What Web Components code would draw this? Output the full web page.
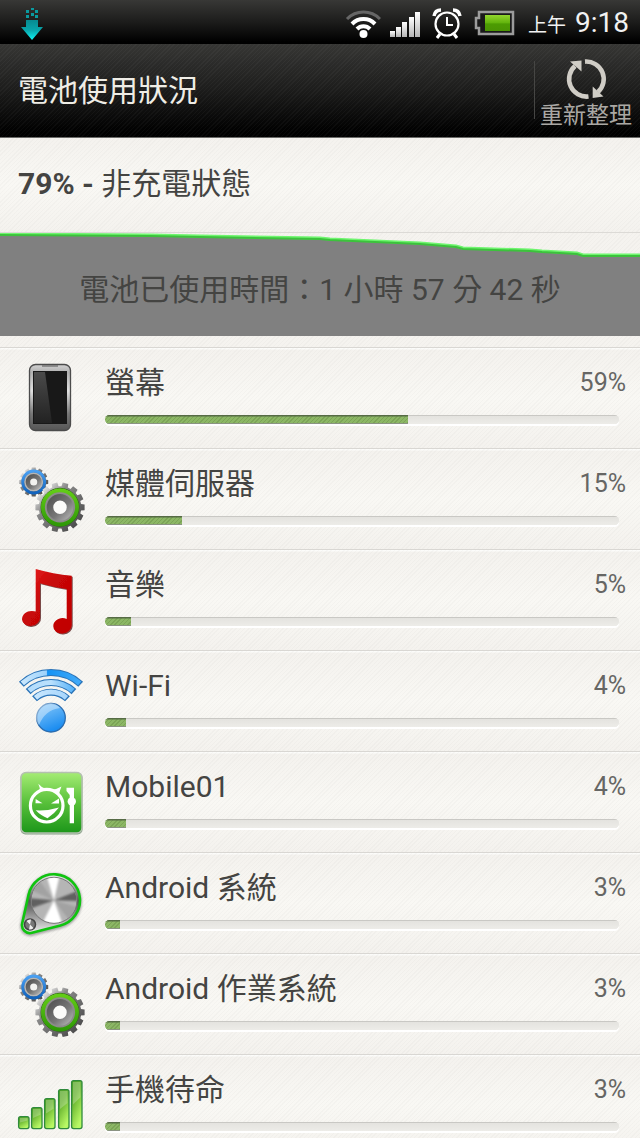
<!DOCTYPE html>
<html lang="zh-TW">
<head>
  <meta charset="UTF-8">
  <meta name="viewport" content="width=device-width, initial-scale=1.0">
  <title>電池使用狀況</title>
  <style>
    body{
      margin: 0;
      font-family: Roboto, "Noto Sans CJK TC", sans-serif;
      font-size: 30px;
      color: #444442;
      --stripes: repeating-linear-gradient(135deg, rgba(0,0,0,.018) 0 1px, transparent 1px 3px);
    }
  </style>
</head>
<body>
  <template id="status-bar">
    <style>
      :host{
        display: flex;
        align-items: center;
        justify-content: space-between;
        height: 44px;
        padding: 0 11px 0 18px;
        box-sizing: border-box;
        background: linear-gradient(#383836, #1c1c1b 50%, #000 95%);
        color: #f2f2f2;
      }
      svg{
        display: block;
      }
      .right{
        display: flex;
        align-items: center;
        gap: 9px;
      }
      .clock{
        display: flex;
        align-items: baseline;
        gap: 9px;
        padding-top: 4px;
        font-size: 28px;
        line-height: 40px;
      }
      .ampm{
        font-size: 19px;
      }
    </style>
    <svg width="28" height="36" viewBox="0 0 28 36">
      <defs>
        <linearGradient id="down" x1="0" y1="0" x2="0" y2="1">
          <stop offset="0" stop-color="#078a90"/>
          <stop offset=".5" stop-color="#08a5ab"/>
          <stop offset="1" stop-color="#0ff6f6"/>
        </linearGradient>
      </defs>
      <g fill="#0a9a9f">
        <rect x="8" y="6" width="3" height="3"/><rect x="13" y="4" width="3" height="2"/><rect x="17" y="6" width="3" height="3"/>
        <rect x="13" y="9" width="3" height="3"/><rect x="8" y="11" width="3" height="3"/><rect x="17" y="11" width="3" height="3"/>
      </g>
      <path d="M8 16H20V23H25L14 36L3 23H8Z" fill="url(#down)"/>
    </svg>
    <div class="right">
      <svg width="36" height="36" viewBox="0 0 36 36" fill="none" stroke="#fff" stroke-width="4">
        <path d="M2 15A23 23 0 0 1 35 15" stroke="#666" stroke-width="3"/>
        <path d="M7 20A16 16 0 0 1 30 20"/>
        <path d="M12 25A9 9 0 0 1 25 25"/>
        <circle cx="18.500" cy="30" r="4" fill="#fff" stroke="none"/>
      </svg>
      <svg width="30" height="36" viewBox="0 0 30 36">
        <defs>
          <linearGradient id="sig" x1="0" y1="0" x2="0" y2="1">
            <stop offset="0" stop-color="#fff"/>
            <stop offset="1" stop-color="#b5b5b5"/>
          </linearGradient>
        </defs>
        <g fill="url(#sig)">
          <rect x="0" y="27" width="5" height="6"/><rect x="6" y="23" width="5" height="10"/><rect x="12" y="18" width="5" height="15"/>
          <rect x="19" y="13" width="5" height="20"/><rect x="25" y="8" width="5" height="25"/>
        </g>
      </svg>
      <svg width="36" height="36" viewBox="0 0 36 36" fill="none" stroke="#fff">
        <circle cx="18" cy="20" r="11.500" stroke-width="2.200"/>
        <path d="M18 13V21H24" stroke-width="2"/>
        <path d="M11 30L8 34M25 30L28 34" stroke-width="3"/>
        <path d="M5 12Q6 6 12 6M24 6Q30 6 31 12" stroke-width="3.500"/>
      </svg>
      <svg width="45" height="36" viewBox="0 0 45 36">
        <defs>
          <linearGradient id="bat" x1="0" y1="0" x2="0" y2="1">
            <stop offset="0" stop-color="#93d62e"/>
            <stop offset=".5" stop-color="#61b30c"/>
            <stop offset=".55" stop-color="#4c9c02"/>
            <stop offset="1" stop-color="#4a9403"/>
          </linearGradient>
        </defs>
        <path d="M5 8H39V30H5V24H2V14H5Z" fill="#1a1a1a" stroke="#9c9c9c" stroke-width="2.500"/>
        <rect x="11" y="11" width="25" height="16" fill="url(#bat)"/>
      </svg>
      <div class="clock"><span class="ampm">上午</span><span>9:18</span></div>
    </div>
  </template>

  <template id="title-bar">
    <style>
      :host{
        display: flex;
        align-items: center;
        justify-content: space-between;
        height: 94px;
        padding-left: 18px;
        box-sizing: border-box;
        border-bottom: 1px solid #6a6a68;
        background:
          repeating-linear-gradient(135deg, rgba(255,255,255,.03) 0 1px, transparent 1px 3px),
          linear-gradient(#363634, #1f1f1e 45%, #000 95%);
        color: #efede6;
      }
      h1{
        margin: 0;
        font-size: 30px;
        font-weight: 400;
        line-height: 44px;
      }
      button{
        display: flex;
        flex-direction: column;
        align-items: center;
        gap: 3px;
        padding: 4px 8px 0 6px;
        border: 0;
        background: linear-gradient(#464644, #464644) 0 8px / 1px 58px no-repeat;
        color: #aaa8a4;
        font: inherit;
        font-size: 23px;
        line-height: 24px;
      }
      svg{
        display: block;
      }
    </style>
    <h1><slot></slot></h1>
    <button type="button">
      <svg width="44" height="44" viewBox="0 0 44 44">
        <g fill="none" stroke="#d0cdc6" stroke-width="4.600">
          <path d="M24.500 39.500A17.500 17.500 0 0 1 11 9"/>
          <path d="M21 4.600A17.500 17.500 0 0 1 34 35"/>
        </g>
        <path d="M6 4.500L17.500 3.500V14.500Z" fill="#d0cdc6"/>
        <path d="M28.700 29.500V41L39.500 39.500Z" fill="#d0cdc6"/>
      </svg>
      <slot name="action"></slot>
    </button>
  </template>

  <template id="battery-level">
    <style>
      :host{
        display: block;
        padding: 24px 18px 26px;
        line-height: 44px;
        border-bottom: 1px solid #dcdad6;
        background: var(--stripes), linear-gradient(#f4f2ee, #f9f8f4 50%, #f4f2ee);
      }
    </style>
    <b id="level"></b> <slot></slot>
  </template>

  <template id="battery-chart">
    <style>
      :host{
        display: grid;
        align-items: center;
        justify-items: center;
        padding-bottom: 11px;
        background: var(--stripes), #f5f3ef;
      }
      svg, p{
        grid-area: 1 / 1;
      }
      svg{
        display: block;
        width: 100%;
        height: 103px;
      }
      p{
        margin: 0;
        padding-top: 10px;
        line-height: 44px;
      }
    </style>
    <svg viewBox="0 0 640 103" preserveAspectRatio="none">
      <path d="M0 1L150 2L200 3L320 5L330 6L420 10L456 13L463 15L530 17L542 18L577 20L583 22H640V103H0Z" fill="#808080"/>
      <path d="M0 1L150 2L200 3L320 5L330 6L420 10L456 13L463 15L530 17L542 18L577 20L583 22H640" fill="none" stroke="#6ff56f" stroke-width="3"/>
      <path d="M0 2L150 3L200 4L320 6L330 7L420 11L456 14L463 16L530 18L542 19L577 21L583 23H640" fill="none" stroke="#3cc23c" stroke-width="2"/>
    </svg>
    <p><slot></slot></p>
  </template>

  <template id="usage-row">
    <style>
      :host{
        display: flex;
        gap: 19px;
        height: 101px;
        padding-left: 18px;
        box-sizing: border-box;
        border-top: 1px solid #d9d7d3;
        background: var(--stripes), linear-gradient(#fcfcfa 0 1px, #f4f2ee 2px, #f9f8f4 50%, #f4f2ee);
      }
      app-icon{
        flex: none;
        margin-top: 15px;
      }
      .main{
        flex: 1;
        padding-right: 14px;
      }
      .head{
        display: flex;
        justify-content: space-between;
        padding-top: 13px;
        line-height: 44px;
      }
      .percent{
        font-size: 25px;
        color: #666664;
      }
      .track{
        margin: 10px 7px 0 0;
      }
      progress{
        display: block;
        width: 100%;
        height: 9px;
        border: 0;
        border-radius: 5px;
        overflow: hidden;
        appearance: none;
        -webkit-appearance: none;
        background: #e9e8e4;
        box-shadow: 0 2px 0 #fff;
      }
      progress::-webkit-progress-bar{
        background: linear-gradient(#c9c8c4 0 1px, #e4e3df 1px, #edece8);
      }
      progress::-webkit-progress-value{
        background:
          linear-gradient(#566b45 0 1px, transparent 2px 8px, #8b9383 8px),
          repeating-linear-gradient(135deg, rgba(60,90,30,.2) 0 1px, transparent 1px 3px),
          #8cb765;
      }
    </style>
    <app-icon></app-icon>
    <div class="main">
      <div class="head">
        <label class="name" for="bar"><slot></slot></label>
        <span class="percent"></span>
      </div>
      <div class="track"><progress id="bar" max="100" value="0"></progress></div>
    </div>
  </template>

  <template id="battery-screen">
    <style>
      :host{
        display: flex;
        flex-direction: column;
        height: 100vh;
        overflow: hidden;
        background: #f5f3ef;
      }
      ::slotted(*){
        flex: none;
      }
      main{
        flex: 1;
        min-height: 0;
        overflow-y: auto;
        scrollbar-width: none;
      }
    </style>
    <slot name="top"></slot>
    <main><slot></slot></main>
  </template>

  <battery-screen>
    <status-bar slot="top"></status-bar>
    <title-bar slot="top">電池使用狀況<span slot="action">重新整理</span></title-bar>
    <battery-level level="79">非充電狀態</battery-level>
    <battery-chart>電池已使用時間：1 小時 57 分 42 秒</battery-chart>
    <usage-row icon="phone" percent="59">螢幕</usage-row>
    <usage-row icon="gears" percent="15">媒體伺服器</usage-row>
    <usage-row icon="music" percent="5">音樂</usage-row>
    <usage-row icon="wifi" percent="4">Wi-Fi</usage-row>
    <usage-row icon="mobile01" percent="4">Mobile01</usage-row>
    <usage-row icon="system" percent="3">Android 系統</usage-row>
    <usage-row icon="gears" percent="3">Android 作業系統</usage-row>
    <usage-row icon="signal" percent="3">手機待命</usage-row>
  </battery-screen>

  <script>
    // outline of a cog wheel centred on cx, cy
    function cog(cx, cy, outer, inner, teeth){
      const points = []
      const step = Math.PI * 2 / teeth
      for(let i = 0; i < teeth; i++){
        const a = i * step
        const corners = [[-.34, inner], [-.26, outer], [.26, outer], [.34, inner]]
        corners.forEach(([k, r]) => {
          const t = a + k * step
          points.push((cx + r * Math.cos(t)).toFixed(1) + ' ' + (cy + r * Math.sin(t)).toFixed(1))
        })
      }
      return 'M' + points.join('L') + 'Z'
    }

    function signalBars(){
      const bars = [[0, 46], [13, 37], [26, 28], [40, 19], [53, 10]]
      return bars.map(([x, y]) => `
        <rect x="${x + .6}" y="${y + .6}" width="10.400" height="${59 - y - 1}" rx="2" fill="url(#bar)" stroke="#2f8a3c" stroke-width="1.300"/>
        <path d="M${x + 2} ${y + 2}H${x + 9.5}V${y + (59 - y) * .35}L${x + 2} ${y + (59 - y) * .5}Z" fill="#fff" opacity=".25"/>`).join('')
    }

    const icons = {
      phone: `
        <defs>
          <linearGradient id="body" x1="0" y1="0" x2="0" y2="1">
            <stop offset="0" stop-color="#d2d2d2"/><stop offset=".12" stop-color="#b0b0b0"/>
            <stop offset=".4" stop-color="#e0e0e0"/><stop offset=".75" stop-color="#777"/><stop offset="1" stop-color="#555"/>
          </linearGradient>
          <linearGradient id="glass" x1="0" y1="0" x2="0" y2="1">
            <stop offset="0" stop-color="#4a4a4a"/><stop offset="1" stop-color="#222"/>
          </linearGradient>
        </defs>
        <rect x="11.500" y="1.500" width="41" height="66" rx="6" fill="url(#body)" stroke="#4c4c4c" stroke-width="1.300"/>
        <path d="M24 3H40" stroke="#666" stroke-width="1.200"/>
        <rect x="15" y="8" width="34" height="53" fill="#181818"/>
        <path d="M16 9H27L34 60H16Z" fill="url(#glass)"/>`,
      gears: `
        <defs>
          <linearGradient id="steel" x1="0" y1="0" x2="1" y2="1">
            <stop offset=".1" stop-color="#f4f4f4"/><stop offset=".35" stop-color="#8a8a8a"/><stop offset="1" stop-color="#3c3c3c"/>
          </linearGradient>
          <linearGradient id="hub" x1="0" y1="0" x2="1" y2="1">
            <stop offset="0" stop-color="#555"/><stop offset=".6" stop-color="#777"/><stop offset="1" stop-color="#aaa"/>
          </linearGradient>
          <linearGradient id="blue" x1="0" y1="0" x2="0" y2="1">
            <stop offset="0" stop-color="#4aa0f2"/><stop offset="1" stop-color="#1163bd"/>
          </linearGradient>
          <linearGradient id="green" x1="0" y1="0" x2="0" y2="1">
            <stop offset="0" stop-color="#62cc16"/><stop offset="1" stop-color="#2f9a06"/>
          </linearGradient>
        </defs>
        <path d="${cog(15.7, 18, 14.6, 12.4, 12)}" fill="url(#steel)"/>
        <circle cx="15.700" cy="18" r="9.500" fill="#b5b5b5"/>
        <circle cx="15.700" cy="18" r="11" fill="none" stroke="url(#blue)" stroke-width="2.800"/>
        <circle cx="15.700" cy="18" r="5.800" fill="#f2f2f0" stroke="url(#hub)" stroke-width="4.500"/>
        <path d="${cog(42, 43.3, 24.8, 21.2, 14)}" fill="url(#steel)"/>
        <circle cx="42" cy="43.300" r="16" fill="#8c8c8a"/>
        <circle cx="42" cy="43.300" r="19" fill="none" stroke="#2d6a12" stroke-width="1"/>
        <circle cx="42" cy="43.300" r="17" fill="none" stroke="url(#green)" stroke-width="3.800"/>
        <circle cx="42" cy="43.300" r="10" fill="#fbfbf9" stroke="url(#hub)" stroke-width="6.500"/>`,
      music: `
        <defs>
          <linearGradient id="red" x1="0" y1="0" x2="1" y2="1">
            <stop offset="0" stop-color="#ee2222"/><stop offset=".4" stop-color="#c80808"/><stop offset="1" stop-color="#c00000"/>
          </linearGradient>
          <filter id="drop" x="-20%" y="-20%" width="140%" height="140%">
            <feDropShadow dx="1" dy="1" stdDeviation=".7" flood-color="#400" flood-opacity=".7"/>
          </filter>
        </defs>
        <g fill="url(#red)" filter="url(#drop)">
          <path d="M17.700 4Q35 9 53.700 10.700V60A9 7.500 -15 0 1 35.300 61.500C35 55 43 51 48.700 54V24Q35 22 22 18.300V52A9 7.500 -15 0 1 4 54.500C4 48 11 44.500 17.700 46.500Z"/>
        </g>`,
      wifi: `
        <defs>
          <linearGradient id="sky">
            <stop offset="0" stop-color="#c9e7fd"/><stop offset=".42" stop-color="#9dd2fb"/>
            <stop offset=".44" stop-color="#1492f4"/><stop offset="1" stop-color="#42aaf8"/>
          </linearGradient>
          <linearGradient id="pale">
            <stop offset="0" stop-color="#b5ddfc"/><stop offset=".5" stop-color="#b9e0fd"/><stop offset="1" stop-color="#5bb4f8"/>
          </linearGradient>
          <linearGradient id="paler">
            <stop offset="0" stop-color="#c8e7fe"/><stop offset="1" stop-color="#a8d6fc"/>
          </linearGradient>
          <linearGradient id="ball" x1="0" y1="0" x2=".4" y2="1">
            <stop offset="0" stop-color="#8ccbfa"/><stop offset="1" stop-color="#1c8df0"/>
          </linearGradient>
        </defs>
        <g fill="none" stroke="#2b74b8" stroke-width="7">
          <path d="M3.300 18.200A43.500 43.500 0 0 1 62.700 18.200"/>
          <path d="M10.100 25.600A33.500 33.500 0 0 1 55.900 25.600"/>
          <path d="M16.500 32.700A24 24 0 0 1 49.500 32.700"/>
        </g>
        <g fill="none" stroke-width="5">
          <path d="M4.300 17.300A43.500 43.500 0 0 1 61.700 17.300" stroke="url(#sky)"/>
          <path d="M11.100 24.700A33.500 33.500 0 0 1 54.900 24.700" stroke="url(#pale)"/>
          <path d="M17.500 31.800A24 24 0 0 1 48.500 31.800" stroke="url(#paler)"/>
        </g>
        <circle cx="33" cy="51.700" r="14.300" fill="url(#ball)" stroke="#2b6cae" stroke-width="1.300"/>
        <path d="M21 59A13 13 0 0 1 42 42Q27 44 21 59Z" fill="#fff" opacity=".4"/>`,
      mobile01: `
        <defs>
          <linearGradient id="lime" x1="0" y1="0" x2="0" y2="1">
            <stop offset="0" stop-color="#a5ec74"/><stop offset=".5" stop-color="#58c03a"/><stop offset="1" stop-color="#1c961a"/>
          </linearGradient>
        </defs>
        <rect x="2.500" y="6" width="62" height="61.500" rx="5" fill="#85a085"/>
        <rect x="3" y="5.500" width="61" height="60.500" rx="5" fill="url(#lime)" stroke="#b4c0b0" stroke-width="1.500"/>
        <circle cx="28.700" cy="38.700" r="16.300" fill="none" stroke="#fff" stroke-width="3.200"/>
        <g fill="#fff">
          <path d="M20.300 16.800Q23 20 27 21.500L21.500 25Q22.500 21 20.300 16.800Z"/>
          <path d="M43.500 19.500Q39 22 35 22.500L41 27Q42 23 43.500 19.500Z"/>
          <path d="M17.700 32L24.500 36.300H17.500Z"/>
          <path d="M41 31.500L33 36.500H41Z"/>
          <path d="M17.700 43.300Q30 44 41 40.500Q36 47 29.500 51.300Q22 48 17.700 43.300Z"/>
          <path d="M48.500 20.700H56V56.300H51.700V28L48.500 24Z"/>
          <circle cx="53.800" cy="34.500" r="4.200"/>
        </g>`,
      system: `
        <defs>
          <linearGradient id="plate" x1="0" y1="0" x2="0" y2="1">
            <stop offset="0" stop-color="#eee"/><stop offset=".45" stop-color="#555"/><stop offset=".6" stop-color="#777"/><stop offset="1" stop-color="#f0f0f0"/>
          </linearGradient>
          <clipPath id="disc"><circle cx="36" cy="32.300" r="22.500"/></clipPath>
          <filter id="soft" x="-30%" y="-30%" width="160%" height="160%"><feGaussianBlur stdDeviation="1.300"/></filter>
        </defs>
        <path d="M10.600 27.600A26 26 0 1 1 42.400 58.500L14 66A8 8 0 0 1 4.200 56.200Z" fill="#888" stroke="#888" stroke-width="4" opacity=".7" filter="url(#soft)"/>
        <path d="M10.600 26.600A26 26 0 1 1 42.400 57.500L14 64.800A8 8 0 0 1 4.200 55.200Z" fill="url(#plate)" stroke="#0fc40f" stroke-width="2.600"/>
        <circle cx="36" cy="32.300" r="23" fill="#b5b5b5" stroke="#777" stroke-width="1"/>
        <g clip-path="url(#disc)"><g filter="url(#soft)">
          <path d="M36 32.300L28 6H42Z M36 32.300L22 60H46Z" fill="#fff"/>
          <path d="M36 32.300L8 30V42Z M36 32.300L62 22V33Z" fill="#606060"/>
          <path d="M36 32.300L8 20L18 8Z M36 32.300L62 40L54 56Z" fill="#a2a2a2"/>
        </g></g>
        <circle cx="12" cy="56.500" r="5.500" fill="#777" stroke="#444" stroke-width="1.500"/>
        <path d="M12 56.500L8.500 53A5 5 0 0 1 13 51.500ZM12 56.500L15.500 60A5 5 0 0 1 11 61.500Z" fill="#eee"/>`,
      signal: `
        <defs>
          <linearGradient id="bar" x1="0" y1="0" x2=".5" y2="1">
            <stop offset="0" stop-color="#4f9f22"/><stop offset=".4" stop-color="#67b32f"/><stop offset="1" stop-color="#b8f864"/>
          </linearGradient>
        </defs>
        ${signalBars()}`
    }

    class TemplateElement extends HTMLElement {
      constructor() {
        super()
        this.attachShadow({ mode: 'open' })
        const template = document.querySelector('template#' + this.localName)
        this.shadowRoot.appendChild(template.content.cloneNode(true))
      }
    }

    class AppIcon extends HTMLElement {
      constructor() {
        super()
        this.attachShadow({ mode: 'open' })
      }
      static get observedAttributes(){
        return ['name']
      }
      attributeChangedCallback(attrName, oldVal, newVal){
        this.shadowRoot.innerHTML = `
          <style>
            :host{ display: block; width: 68px; height: 70px; }
            svg{ display: block; overflow: visible; }
          </style>
          <svg width="68" height="70" viewBox="0 0 68 70" aria-hidden="true">${icons[newVal] || ''}</svg>`
      }
    }

    class BatteryLevel extends TemplateElement {
      static get observedAttributes(){
        return ['level']
      }
      attributeChangedCallback(attrName, oldVal, newVal){
        this.shadowRoot.querySelector('#level').textContent = newVal + '% -'
      }
    }

    class UsageRow extends TemplateElement {
      static get observedAttributes(){
        return ['icon', 'percent']
      }
      attributeChangedCallback(attrName, oldVal, newVal){
        switch(attrName){
          case 'icon':
            this.shadowRoot.querySelector('app-icon').setAttribute('name', newVal)
            break
          case 'percent':
            this.shadowRoot.querySelector('.percent').textContent = newVal + '%'
            this.shadowRoot.querySelector('progress').value = Number(newVal)
            break
        }
      }
    }

    customElements.define('app-icon', AppIcon)
    customElements.define('status-bar', class extends TemplateElement {})
    customElements.define('title-bar', class extends TemplateElement {})
    customElements.define('battery-level', BatteryLevel)
    customElements.define('battery-chart', class extends TemplateElement {})
    customElements.define('usage-row', UsageRow)
    customElements.define('battery-screen', class extends TemplateElement {})
  </script>
</body>
</html>
